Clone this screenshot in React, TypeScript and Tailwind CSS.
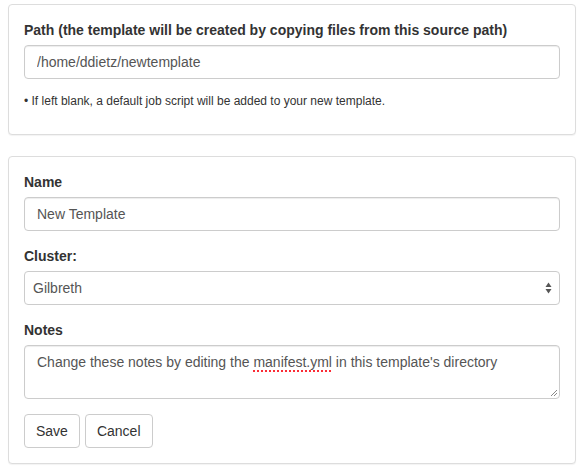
export default function App() {
  const label = "block text-[14px] leading-[20px] font-bold text-[#333] mb-[5px]";
  const input =
    "block w-full h-[34px] px-[12px] border border-[#ccc] rounded-[4px] bg-white text-[14px] text-[#555] shadow-[inset_0_1px_1px_rgba(0,0,0,0.075)] outline-none";
  const btn =
    "h-[34px] px-[11px] border border-[#ccc] rounded-[4px] bg-white text-[14px] text-[#333]";

  return (
    <div className="min-h-screen bg-white pt-[4px] pl-[8px] font-['Liberation_Sans',Arial,sans-serif] text-[#333]">
      <div className="w-[568px]">
        {/* Source path panel */}
        <div className="border border-[#ddd] rounded-[4px] bg-white shadow-[0_1px_1px_rgba(0,0,0,0.05)] p-[15px] mb-[21px]">
          <label className={label}>
            Path (the template will be created by copying files from this source path)
          </label>
          <input className={input} defaultValue="/home/ddietz/newtemplate" />
          <p className="mt-[14px] mb-[9px] text-[12px] leading-[17px] text-[#333]">
            • If left blank, a default job script will be added to your new template.
          </p>
        </div>

        {/* Template details panel */}
        <div className="border border-[#ddd] rounded-[4px] bg-white shadow-[0_1px_1px_rgba(0,0,0,0.05)] p-[15px]">
          <div className="mb-[15px]">
            <label className={label}>Name</label>
            <input className={input} defaultValue="New Template" />
          </div>

          <div className="mb-[15px]">
            <label className={label}>Cluster:</label>
            <div className="relative">
              <select
                className="block w-full h-[34px] pl-[8px] pr-[24px] border border-[#ccc] rounded-[4px] bg-white text-[14px] text-[#555] appearance-none outline-none"
                defaultValue="Gilbreth">
                <option>Gilbreth</option>
              </select>
              <svg
                className="absolute right-[8px] top-[11px] pointer-events-none"
                width="7"
                height="12"
                viewBox="0 0 7 12">
                <path d="M3.5 0.5 L6.5 5 L0.5 5 Z" fill="#555" />
                <path d="M3.5 11.5 L6.5 7 L0.5 7 Z" fill="#555" />
              </svg>
            </div>
          </div>

          <div className="mb-[15px]">
            <label className={label}>Notes</label>
            <div className="relative h-[54px] px-[12px] py-[6px] border border-[#ccc] rounded-[4px] bg-white text-[14px] leading-[20px] text-[#555] shadow-[inset_0_1px_1px_rgba(0,0,0,0.075)]">
              Change these notes by editing the{" "}
              <span className="underline decoration-dotted decoration-red-500 decoration-2 underline-offset-[3px]">
                manifest.yml
              </span>{" "}
              in this template's directory
              <svg
                className="absolute right-[1px] bottom-[1px]"
                width="8"
                height="8"
                viewBox="0 0 8 8">
                <path d="M7 1 L1 7 M7 4 L4 7" stroke="#888" strokeWidth="1" />
              </svg>
            </div>
          </div>

          <div className="flex gap-[5px]">
            <button className={btn}>Save</button>
            <button className={btn}>Cancel</button>
          </div>
        </div>
      </div>
    </div>
  );
}
